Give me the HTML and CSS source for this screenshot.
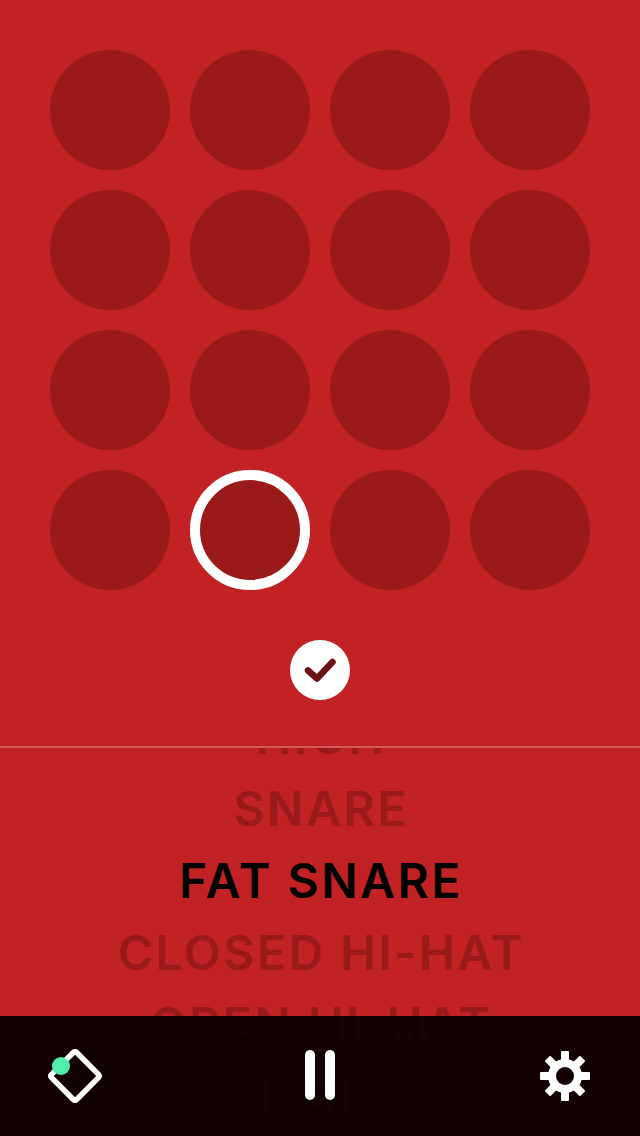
FILE: index.html
```html
<!DOCTYPE html>
<html lang="en">
<head>
  <meta charset="UTF-8" />
  <title>Drum Pads</title>
  <link rel="stylesheet" href="styles.css">
</head>
<body>
  <div class="app">
    <!-- Step pads -->
    <div class="pads">
      <div class="pad"></div><div class="pad"></div><div class="pad"></div><div class="pad"></div>
      <div class="pad"></div><div class="pad"></div><div class="pad"></div><div class="pad"></div>
      <div class="pad"></div><div class="pad"></div><div class="pad"></div><div class="pad"></div>
      <div class="pad"></div><div class="pad active"></div><div class="pad"></div><div class="pad"></div>
    </div>

    <!-- Confirm -->
    <div class="confirm">
      <svg class="check" viewBox="0 0 60 60" width="60" height="60">
        <path d="M18 30.5 L27 38.5 L42.5 22" fill="none" stroke="#6b1214" stroke-width="6.5" stroke-linecap="round" stroke-linejoin="round" />
      </svg>
    </div>

    <!-- Sound list -->
    <div class="sounds">
      <div class="sound">HIGH</div>
      <div class="sound">SNARE</div>
      <div class="sound current">FAT SNARE</div>
      <div class="sound">CLOSED HI-HAT</div>
      <div class="sound">OPEN HI-HAT</div>
      <div class="sound">BLIP</div>
    </div>

    <!-- Bottom bar -->
    <div class="toolbar">
      <svg viewBox="0 0 60 60" width="60" height="60">
        <rect x="12.25" y="12.25" width="35.5" height="35.5" rx="2" transform="rotate(45 30 30)" fill="none" stroke="#fff" stroke-width="5.5" />
        <circle cx="16" cy="20" r="9" fill="#52eeac" />
      </svg>
      <svg viewBox="0 0 60 60" width="60" height="60">
        <rect x="15" y="4" width="10" height="50" rx="5" fill="#fff" />
        <rect x="35" y="4" width="10" height="50" rx="5" fill="#fff" />
      </svg>
      <svg viewBox="0 0 60 60" width="60" height="60">
        <g fill="#fff">
          <rect x="26" y="5" width="8" height="50" rx="1" />
          <rect x="26" y="5" width="8" height="50" rx="1" transform="rotate(45 30 30)" />
          <rect x="26" y="5" width="8" height="50" rx="1" transform="rotate(90 30 30)" />
          <rect x="26" y="5" width="8" height="50" rx="1" transform="rotate(135 30 30)" />
        </g>
        <circle cx="30" cy="30" r="13" fill="none" stroke="#fff" stroke-width="8" />
        <circle cx="30" cy="30" r="9" fill="#130303" />
      </svg>
    </div>
  </div>
</body>
</html>
```

FILE: styles.css
```css
* { box-sizing: border-box; margin: 0; padding: 0; }

body {
  background: #c22223;
  font-family: 'Inter', sans-serif;
  overflow: hidden;
}

.app {
  position: relative;
  width: 640px;
  height: 1136px;
  overflow: hidden;
  display: flex;
  flex-direction: column;
  align-items: center;
}

/* Pads */
.pads {
  display: grid;
  grid-template-columns: repeat(4, 120px);
  gap: 20px;
  padding-top: 50px;
}
.pad {
  width: 120px;
  height: 120px;
  border-radius: 50%;
  background: #9a1a1a;
}
.pad.active {
  border: 10px solid #fff;
}

/* Confirm button */
.confirm {
  width: 60px;
  height: 60px;
  margin-top: 50px;
  border-radius: 50%;
  background: #fff;
}
.check { display: block; }

/* Sound list */
.sounds {
  width: 100%;
  height: 390px;
  margin-top: 46px;
  border-top: 2px solid #d6595a;
  overflow: hidden;
  display: flex;
  flex-direction: column;
  align-items: center;
}
.sound {
  flex: none;
  height: 72px;
  line-height: 72px;
  font-size: 48px;
  font-weight: 600;
  letter-spacing: 2.5px;
  padding-left: 2px;
  color: #9a1a1a;
  white-space: nowrap;
}
.sound:first-child { margin-top: -47px; }
.sound.current { color: #000; }

/* Bottom bar */
.toolbar {
  position: absolute;
  left: 0;
  right: 0;
  bottom: 0;
  height: 120px;
  padding: 0 45px;
  background: rgba(0, 0, 0, 0.9);
  display: flex;
  align-items: center;
  justify-content: space-between;
}
```
